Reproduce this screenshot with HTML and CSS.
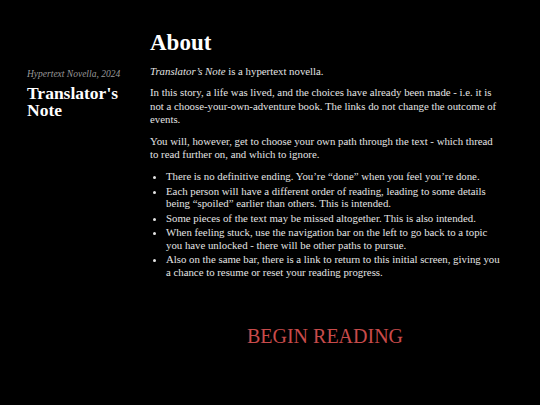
FILE: index.html
```html
<!DOCTYPE html>
<html>
<head>
<meta charset="utf-8">
<link rel="stylesheet" href="styles.css">
</head>
<body>
<div class="page">
  <aside class="sidebar">
    <p class="meta">Hypertext Novella, 2024</p>
    <h2 class="title">Translator's Note</h2>
  </aside>
  <main class="content">
    <h1 class="heading">About</h1>
    <p><em>Translator’s Note</em> is a hypertext novella.</p>
    <p>In this story, a life was lived, and the choices have already been made - i.e. it is not a choose-your-own-adventure book. The links do not change the outcome of events.</p>
    <p>You will, however, get to choose your own path through the text - which thread to read further on, and which to ignore.</p>
    <ul class="notes">
      <li>There is no definitive ending. You’re “done” when you feel you’re done.</li>
      <li>Each person will have a different order of reading, leading to some details being “spoiled” earlier than others. This is intended.</li>
      <li>Some pieces of the text may be missed altogether. This is also intended.</li>
      <li>When feeling stuck, use the navigation bar on the left to go back to a topic you have unlocked - there will be other paths to pursue.</li>
      <li>Also on the same bar, there is a link to return to this initial screen, giving you a chance to resume or reset your reading progress.</li>
    </ul>
    <div class="begin"><a href="#" class="begin-link">BEGIN READING</a></div>
  </main>
</div>
</body>
</html>
```
FILE: styles.css
```css
html, body {
  margin: 0;
  padding: 0;
  background: #000;
}
body {
  width: 540px;
  height: 405px;
  overflow: hidden;
  font-family: "Liberation Serif", "DejaVu Serif", serif;
  color: #e4e4e4;
}
.page {
  display: flex;
}
.sidebar {
  width: 123px;
  padding-left: 27px;
  padding-top: 69px;
}
.meta {
  margin: 0;
  font-style: italic;
  font-size: 9.5px;
  color: #9a9a9a;
}
.title {
  margin: 6px 0 0;
  font-size: 17.5px;
  line-height: 16.5px;
  font-weight: bold;
  color: #fff;
}
.content {
  width: 350px;
  padding-top: 30px;
  font-size: 10.8px;
  line-height: 13.4px;
}
.heading {
  margin: 0 0 9px;
  font-size: 23px;
  line-height: 26px;
  font-weight: bold;
  color: #fff;
}
.content p {
  margin: 0 0 8px;
}
.notes {
  margin: 9px 0 0;
  padding-left: 16px;
  line-height: 12.5px;
}
.notes li {
  margin: 0 0 2px;
}
.begin {
  margin-top: 46px;
  text-align: center;
}
.begin-link {
  color: #c84b4b;
  text-decoration: none;
  font-size: 20px;
  line-height: 24px;
}
```
